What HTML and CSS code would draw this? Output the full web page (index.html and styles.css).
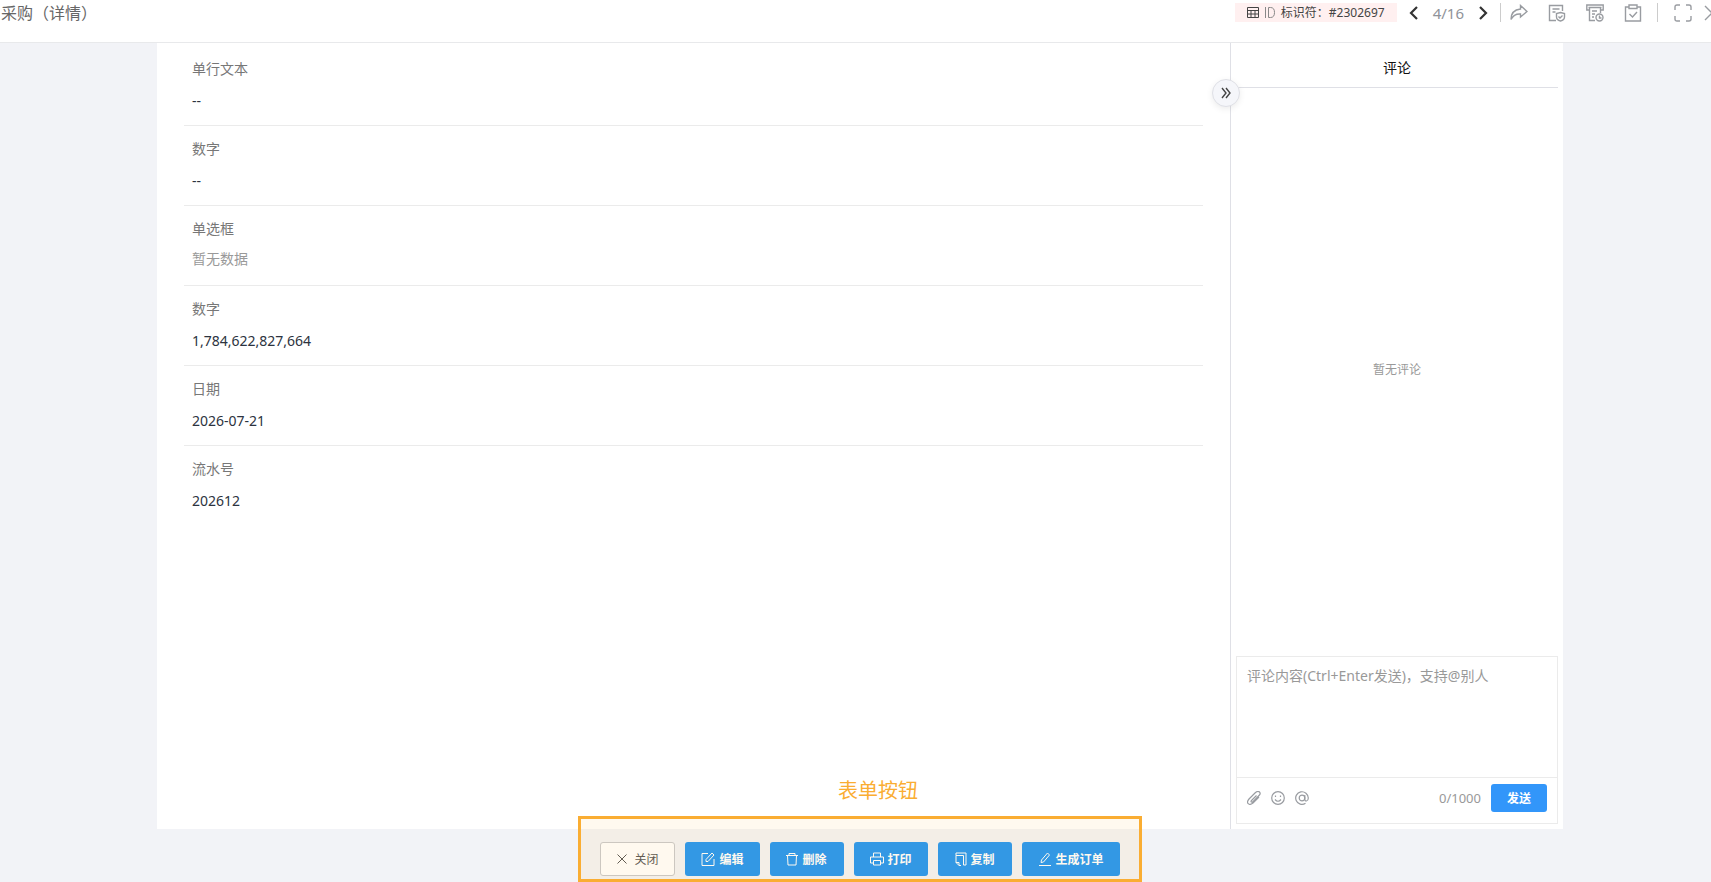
FILE: index.html
```
<!DOCTYPE html>
<html lang="zh-CN">
  <head>
    <meta charset="utf-8">
    <title>采购（详情）</title>
    <link rel="stylesheet" href="styles.css">
  </head>
  <body>
    <div class="page">
      <header class="topbar">
        <h1>采购（详情）</h1>
        <div class="record-id">
          <svg width="12" height="11" viewBox="0 0 12 11"><path d="M.5.5h11v10H.5zM.5 3.500h11M.5 7h11M4 3.500v7M8 3.500v7"/></svg>
          <svg class="thin" width="10" height="11" viewBox="0 0 10 11"><path d="M.5 0v11M3.500.5h2q4 0 4 5t-4 5h-2z"/></svg>
          <span>标识符：#2302697</span>
        </div>
        <div class="pager">
          <button class="icon-btn dark" aria-label="上一条"><svg width="10" height="14" viewBox="0 0 10 14"><path d="M8 1L2 7l6 6"/></svg></button>
          <span>4/16</span>
          <button class="icon-btn dark" aria-label="下一条"><svg width="10" height="14" viewBox="0 0 10 14"><path d="M2 1l6 6-6 6"/></svg></button>
        </div>
        <div class="actions">
          <button class="icon-btn" aria-label="分享"><svg width="18" height="18" viewBox="0 0 18 18"><path d="M10.500 1.500l6.500 6-6.500 5.500v-3Q4 9.500 1 15.500 1 6 10.500 5z"/></svg></button>
          <button class="icon-btn" aria-label="审批记录"><svg width="18" height="18" viewBox="0 0 18 18"><path d="M8 16.500H1.500v-15h13V7M4.500 5h7M4.500 8h3M12.500 8.500l4 1v3.500q0 3-4 4-4-1-4-4V9.500zM10.500 12.500l1.500 1.500 2.500-2.500"/></svg></button>
          <button class="icon-btn" aria-label="打印记录"><svg width="18" height="18" viewBox="0 0 18 18"><path d="M3.500 6H.8V1h16.400v5h-2.700M2.500 3.500h13M3.500 4v12.500H9M14.500 4v5M6 7h5M6 10h3M6 13h2"/><circle cx="13.500" cy="13.500" r="3.500"/><path d="M13.500 11.500v2.500h2"/></svg></button>
          <button class="icon-btn" aria-label="任务"><svg width="18" height="18" viewBox="0 0 18 18"><path d="M5 3H1.500v14h15V3H13M5 1h8v3.500H5zM5.500 10l3 3 4.500-5"/></svg></button>
        </div>
        <div class="window-tools">
          <button class="icon-btn" aria-label="全屏"><svg width="18" height="18" viewBox="0 0 18 18"><path d="M1 6V3q0-2 2-2h3M12 1h3q2 0 2 2v3M17 12v3q0 2-2 2h-3M6 17H3q-2 0-2-2v-3"/></svg></button>
          <button class="icon-btn" aria-label="关闭窗口"><svg width="16" height="16" viewBox="0 0 16 16"><path d="M1 1l14 14M15 1L1 15"/></svg></button>
        </div>
      </header>

      <main class="card">
        <dl class="fields">
          <div class="field"><dt>单行文本</dt><dd>--</dd></div>
          <div class="field"><dt>数字</dt><dd>--</dd></div>
          <div class="field"><dt>单选框</dt><dd class="empty">暂无数据</dd></div>
          <div class="field"><dt>数字</dt><dd>1,784,622,827,664</dd></div>
          <div class="field"><dt>日期</dt><dd>2026-07-21</dd></div>
          <div class="field"><dt>流水号</dt><dd>202612</dd></div>
        </dl>

        <aside class="comments">
          <button class="collapse" aria-label="收起评论"><svg width="10" height="12" viewBox="0 0 10 12"><path d="M1 1l4 5-4 5M5 1l4 5-4 5"/></svg></button>
          <h2>评论</h2>
          <div class="no-comments">暂无评论</div>
          <form class="editor">
            <textarea aria-label="评论内容" placeholder="评论内容(Ctrl+Enter发送)，支持@别人"></textarea>
            <div class="editor-bar">
              <button type="button" class="icon-btn" aria-label="附件"><svg width="14" height="14" viewBox="0 0 14 14"><path d="M9.500 4.500l-5 5q-1 1 0 1.500t1.500-.5l6-6q2-2 .5-3.500t-4 .5L2 8q-2.500 3-.8 4.700T6 12l6-6"/></svg></button>
              <button type="button" class="icon-btn" aria-label="表情"><svg width="14" height="14" viewBox="0 0 14 14"><circle cx="7" cy="7" r="6.300"/><path d="M4.500 4.500v1.500M9.500 4.500v1.500M4 8.500q3 3.500 6 0"/></svg></button>
              <button type="button" class="icon-btn" aria-label="提及"><svg width="14" height="14" viewBox="0 0 14 14"><circle cx="7" cy="7" r="2.800"/><path d="M9.800 4v4.500q.2 1.700 1.700 1.500 1.800-.5 1.800-3A6.300 6.300 0 1 0 10.500 12.300"/></svg></button>
              <span class="count">0/1000</span>
              <button type="button" class="send">发送</button>
            </div>
          </form>
        </aside>
      </main>

      <footer class="form-buttons">
        <button class="btn plain"><svg width="10" height="10" viewBox="0 0 10 10"><path d="M.5.5l9 9M9.500.5l-9 9"/></svg>关闭</button>
        <button class="btn"><svg width="14" height="14" viewBox="0 0 14 14"><path d="M7 1.500H1v12h12V7M5 9.500V7.500l6-6.500 2 2-6 6.500z"/></svg>编辑</button>
        <button class="btn"><svg width="12" height="14" viewBox="0 0 12 14"><path d="M0 3.500h12M3 3.500v-2h6v2M1.500 3.500l.5 9.500h8l.5-9.500"/></svg>删除</button>
        <button class="btn"><svg width="14" height="14" viewBox="0 0 14 14"><path d="M3.500 5V1h7v4M3.500 11h-3V5h13v6h-3M3.500 8.500h7V13h-7z"/></svg>打印</button>
        <button class="btn"><svg width="12" height="14" viewBox="0 0 12 14"><path d="M1 3.500V10.500l3 3h2M1 10.500h3v3M1 1h10v12H8.500V3.500H1V1"/></svg>复制</button>
        <button class="btn"><svg width="14" height="14" viewBox="0 0 14 14"><path d="M1 13.500h12M3 10.500l.5-2.500 6-7 2 2-6 7z"/></svg>生成订单</button>
        <div class="callout"><span>表单按钮</span></div>
      </footer>
    </div>
  </body>
</html>
```
FILE: styles.css
```
* { box-sizing: border-box; }
html,
body {
  margin: 0;
  height: 100%;
  overflow: hidden;
}
body {
  font-family: "Noto Sans", "Noto Sans CJK SC", sans-serif;
  font-size: 14px;
  line-height: 20px;
  color: #2c3340;
  background-color: #f2f3f7;
}
button,
textarea {
  font-family: inherit;
  margin: 0;
}
button {
  cursor: pointer;
}
svg {
  display: block;
  fill: none;
  stroke: currentColor;
}

/* runs slightly past the right edge of the window */
.page {
  display: flex;
  flex-direction: column;
  height: 100%;
  margin-right: -9px;
}

/* top bar */
.topbar {
  display: flex;
  align-items: flex-start;
  flex: none;
  height: 43px;
  padding-top: 3px;
  background: #fff;
  border-bottom: 1px solid #e8e9eb;
}
.topbar h1 {
  flex: 1;
  margin: 0;
  padding-left: 1px;
  font-size: 16px;
  font-weight: normal;
  color: #666;
}
.record-id {
  display: flex;
  align-items: center;
  gap: 6px;
  height: 19px;
  padding: 0 12px;
  font-size: 12px;
  color: #444;
  background: #fff0f0;
}
.record-id .thin {
  color: #888;
}
.icon-btn {
  padding: 0;
  border: 0;
  background: none;
  color: #999ca1;
}
.topbar .icon-btn svg {
  stroke-width: 1.4;
}
.topbar .dark {
  color: #333;
}
.topbar .dark svg {
  stroke-width: 2.2;
}
.pager {
  display: flex;
  align-items: center;
  gap: 14px;
  height: 19px;
  padding: 0 12px;
  font-size: 15px;
  color: #909399;
}
.actions,
.window-tools {
  display: flex;
  align-items: center;
  height: 19px;
  border-left: 1px solid #ccc;
}
.actions {
  gap: 20px;
  padding: 0 15px 0 9px;
}
.window-tools {
  gap: 12px;
  padding-left: 16px;
}

/* record */
.card {
  display: flex;
  flex: 1;
  min-height: 0;
  margin: 0 157px;
  background: #fff;
}
.fields {
  flex: 1;
  margin: 0;
  padding: 3px 27px;
}
.field {
  height: 80px;
  padding: 13px 8px 0;
  border-bottom: 1px solid #ebebeb;
}
.field:last-child {
  border-bottom: 0;
}
.field dt {
  color: #777;
}
.field dd {
  margin: 12px 0 0;
}
.field .empty {
  margin-top: 10px;
  color: #999;
}

/* comments */
.comments {
  position: relative;
  display: flex;
  flex-direction: column;
  width: 333px;
  padding: 0 5px 5px;
  border-left: 1px solid #dfe0e6;
}
.comments h2 {
  margin: 0 0 0 -5px;
  padding: 15px 0 9px 5px;
  font-size: 14px;
  font-weight: normal;
  text-align: center;
  color: #111;
  border-bottom: 1px solid #dfe0e6;
}
.collapse {
  position: absolute;
  top: 36px;
  left: -19px;
  display: flex;
  align-items: center;
  justify-content: center;
  width: 28px;
  height: 28px;
  padding: 0;
  color: #444;
  background: #f5f6fa;
  border: 1px solid #dfe0e6;
  border-radius: 50%;
  box-shadow: 0 2px 6px rgba(0,0,0,.08);
}
.collapse svg {
  stroke-width: 1.4;
}
.no-comments {
  display: flex;
  flex: 1;
  align-items: center;
  justify-content: center;
  padding-bottom: 4px;
  font-size: 12px;
  color: #999;
}
.editor {
  border: 1px solid #ebebeb;
}
.editor textarea {
  display: block;
  width: 100%;
  height: 120px;
  padding: 9px 10px;
  font-size: 14px;
  line-height: 20px;
  border: 0;
  outline: none;
  resize: none;
}
.editor textarea::placeholder {
  color: #999;
}
.editor-bar {
  display: flex;
  align-items: center;
  gap: 10px;
  height: 46px;
  padding: 0 10px 6px;
  border-top: 1px solid #ebebeb;
}
.editor-bar .icon-btn svg {
  stroke-width: 1.2;
}
.count {
  margin-left: auto;
  font-size: 13px;
  color: #999;
}
.send {
  width: 56px;
  height: 28px;
  padding: 0;
  font-size: 12px;
  font-weight: bold;
  color: #fff;
  background: #3296fa;
  border: 0;
  border-radius: 3px;
}

/* form buttons */
.form-buttons {
  position: relative;
  display: flex;
  flex: none;
  gap: 10px;
  align-self: center;
  height: 53px;
  padding: 13px 22px 0;
}
.btn {
  display: flex;
  align-items: center;
  justify-content: center;
  gap: 4px;
  min-width: 74px;
  height: 34px;
  padding: 0 16px;
  font-size: 12px;
  font-weight: bold;
  color: #fff;
  background: #2296f4;
  border: 0;
  border-radius: 3px;
}
.btn.plain {
  gap: 7px;
  font-weight: normal;
  color: #555;
  background: #fff;
  border: 1px solid #c8c9cc;
}
.callout {
  position: absolute;
  top: -13px;
  right: 0;
  bottom: 0;
  left: 0;
  background: rgba(250,173,50,.08);
  border: 3px solid #faad32;
  pointer-events: none;
}
.callout span {
  position: absolute;
  top: -42px;
  left: 0;
  right: 0;
  padding-left: 36px;
  font-size: 20px;
  line-height: 28px;
  text-align: center;
  color: #faad32;
}
```
